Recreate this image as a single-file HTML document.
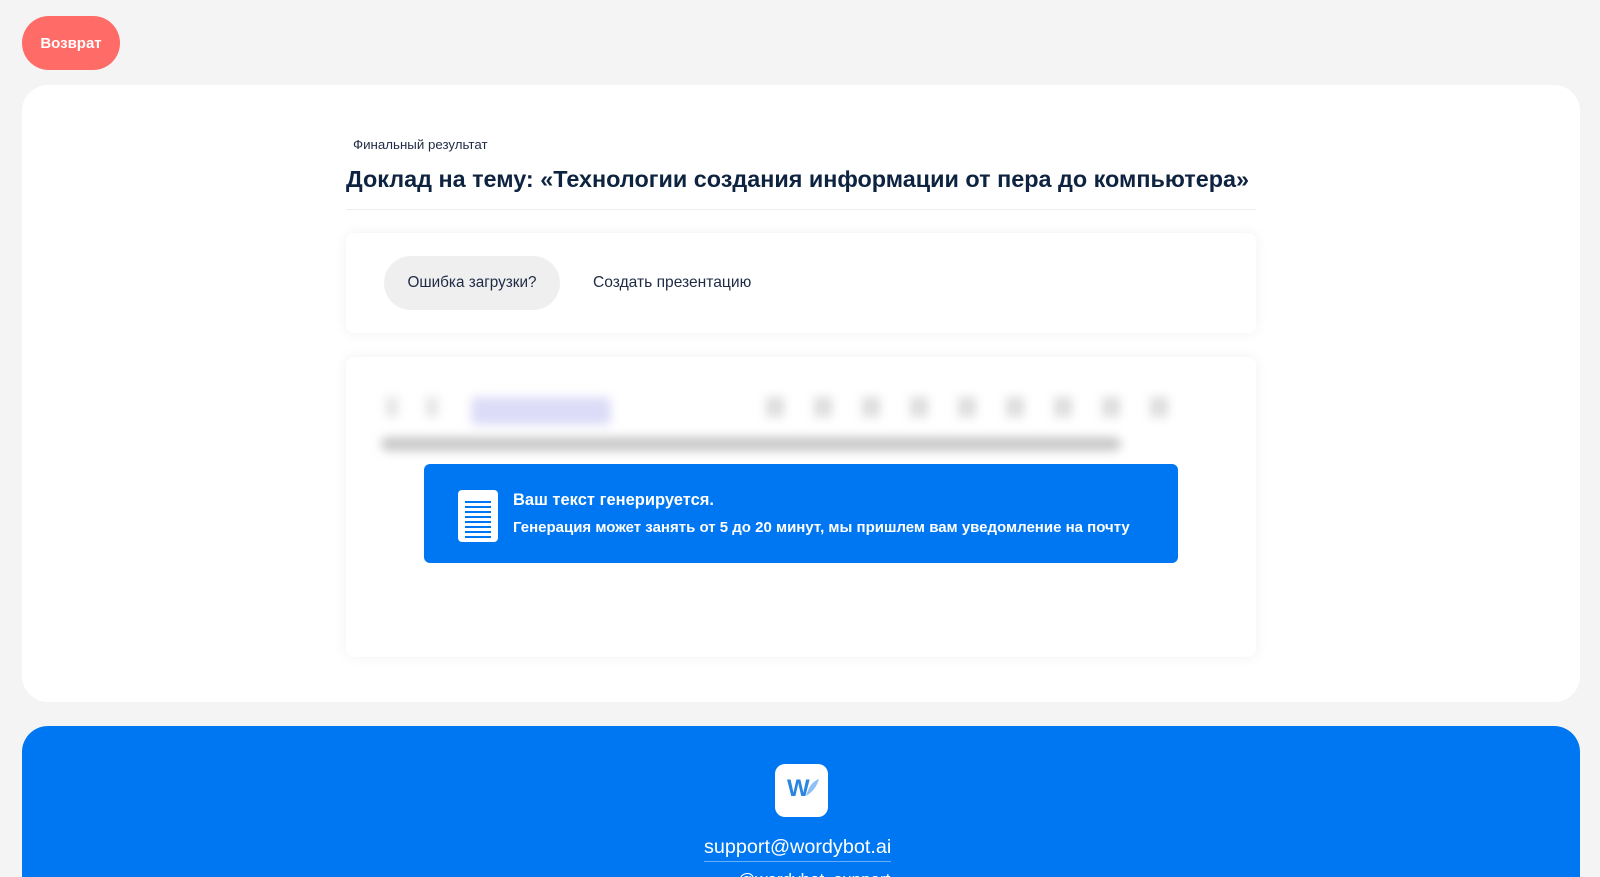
<!DOCTYPE html>
<html style="overflow:hidden;height:877px"><head><meta charset="utf-8"><style>
body{margin:0;width:1600px;height:877px;overflow:hidden;background:#f4f4f4;font-family:"Liberation Sans",sans-serif;position:relative}
.btn{position:absolute;left:22px;top:16px;width:98px;height:54px;border-radius:27px;background:#ff6b66;color:#fff;font-size:15px;font-weight:bold;display:flex;align-items:center;justify-content:center}
.card{position:absolute;left:22px;top:85px;width:1558px;height:617px;background:#fff;border-radius:26px}
.lbl{position:absolute;left:353px;top:137px;font-size:13.3px;color:#1f2a44}
.ttl{position:absolute;left:346px;top:166px;font-size:23.4px;font-weight:bold;color:#0e2340;white-space:nowrap}
.hr{position:absolute;left:346px;top:209px;width:910px;height:1px;background:#eceef2}
.box1{position:absolute;left:346px;top:233px;width:910px;height:100px;box-shadow:0 0 14px rgba(0,0,0,.06);border-radius:8px;background:#fff}
.pill{position:absolute;left:384px;top:256px;width:176px;height:54px;border-radius:27px;background:#efefef;font-size:15.3px;color:#1f2a44;display:flex;align-items:center;justify-content:center}
.pres{position:absolute;left:593px;top:274px;font-size:15.6px;color:#1f2a44}
.box2{position:absolute;left:346px;top:357px;width:910px;height:300px;box-shadow:0 0 14px rgba(0,0,0,.06);border-radius:8px;background:#fff;overflow:hidden}
.blur{position:absolute;filter:blur(5px)}
.alert{position:absolute;left:424px;top:464px;width:754px;height:99px;background:#0077f2;border-radius:6px;color:#fff}
.foot{position:absolute;left:22px;top:726px;width:1558px;height:151px;background:#0077f2;border-radius:26px 26px 0 0;overflow:hidden}
.logo{position:absolute;left:775px;top:764px;width:53px;height:53px;background:#fff;border-radius:10px}
.mail{position:absolute;left:704px;top:836px;font-size:19.8px;color:#fff;border-bottom:1px solid rgba(255,255,255,.4);padding-bottom:2px}
</style></head><body>
<div class="btn">Возврат</div>
<div class="card"></div>
<div class="lbl">Финальный результат</div>
<div class="ttl">Доклад на тему: «Технологии создания информации от пера до компьютера»</div>
<div class="hr"></div>
<div class="box1"></div>
<div class="pill">Ошибка загрузки?</div>
<div class="pres">Создать презентацию</div>
<div class="box2">
<div class="blur" style="left:125px;top:40px;width:140px;height:28px;background:#dcdcf8;border-radius:6px"></div>
<div class="blur" style="left:35px;top:80px;width:740px;height:14px;background:#c8c8c8;border-radius:7px"></div>
<div class="blur" style="left:420px;top:40px;width:420px;height:20px;background:repeating-linear-gradient(90deg,#ddd 0 18px,transparent 18px 48px)"></div>
<div class="blur" style="left:40px;top:40px;width:60px;height:20px;background:repeating-linear-gradient(90deg,#e4e4e4 0 12px,transparent 12px 40px)"></div>
</div>
<div class="alert">
<svg style="position:absolute;left:34px;top:24px" width="40" height="54" viewBox="0 0 40 54"><rect x="0" y="2" width="40" height="52" rx="4" fill="#fff"/><g stroke="#0077f2" stroke-width="2"><line x1="7" y1="14" x2="33" y2="14"/><line x1="7" y1="19" x2="33" y2="19"/><line x1="7" y1="24" x2="33" y2="24"/><line x1="7" y1="29" x2="33" y2="29"/><line x1="7" y1="34" x2="33" y2="34"/><line x1="7" y1="39" x2="33" y2="39"/><line x1="7" y1="44" x2="33" y2="44"/><line x1="7" y1="49" x2="33" y2="49"/></g></svg>
<div style="position:absolute;left:89px;top:27px;font-size:16.5px;font-weight:bold">Ваш текст генерируется.</div>
<div style="position:absolute;left:89px;top:55px;font-size:15px;font-weight:bold">Генерация может занять от 5 до 20 минут, мы пришлем вам уведомление на почту</div>
</div>
<div class="foot"><div style="position:absolute;left:716px;top:144px;font-size:17px;color:#fff">@wordybot_support</div></div>
<div class="logo"><div style="position:absolute;left:12px;top:11px;font-size:24px;font-weight:bold;color:#2a86e0">W</div><svg style="position:absolute;left:29px;top:14px" width="16" height="20"><path d="M2 18 Q6 4 15 1 Q12 12 2 18Z" fill="#8fc0f5"/></svg></div>
<div class="mail">support@wordybot.ai</div>
</body></html>
